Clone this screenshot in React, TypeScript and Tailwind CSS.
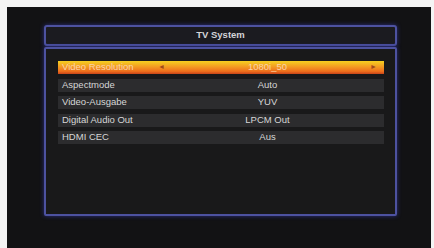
const rows: Array<{ label: string; value: string }> = [
	{ label: "Video Resolution", value: "1080i_50" },
	{ label: "Aspectmode", value: "Auto" },
	{ label: "Video-Ausgabe", value: "YUV" },
	{ label: "Digital Audio Out", value: "LPCM Out" },
	{ label: "HDMI CEC", value: "Aus" },
];

export default function App() {
	return (
		<div className="w-[434px] h-[248px] bg-[#f4f4f4] pt-[7px] pl-[7px] pr-[3px] flex font-['Liberation_Sans',Arial,sans-serif]">
			<div className="flex-1 bg-[#121214] pl-[37px] pt-[18px]">
				<div className="w-[353px] h-[21px] rounded-[3px] border-2 border-[#4d52a0] bg-[#1b1b20] shadow-[0_0_4px_#2c3080] flex items-center justify-center">
					<span className="text-[9.5px] font-bold text-[#d4d4d8]">TV System</span>
				</div>
				<div className="mt-[1px] w-[353px] h-[169px] rounded-[2px] border-2 border-[#4d52a0] bg-[#19191a] shadow-[0_0_4px_#2c3080] pl-[12px] pr-[11px] pt-[12px] flex flex-col gap-[4.5px]">
					{rows.map((row, i) => (
						<div
							key={row.label}
							className={`h-[13px] flex items-center text-[9.5px] ${
								i === 0
									? "bg-[linear-gradient(#f5d020,#f39a22_45%,#ee6e1c_80%,#c8441a)] text-[#fbd3a8]"
									: "bg-[#2c2c2e] text-[#d6d6d6]"
							}`}
						>
							<span className="w-[94px] pl-[4px] whitespace-nowrap">{row.label}</span>
							<div className="flex-1 flex items-center justify-between pl-[6px] pr-[7px]">
								<span className={`text-[7px] ${i === 0 ? "text-[#a04a1c]" : "invisible"}`}>◄</span>
								<span className="whitespace-nowrap">{row.value}</span>
								<span className={`text-[7px] ${i === 0 ? "text-[#a04a1c]" : "invisible"}`}>►</span>
							</div>
						</div>
					))}
				</div>
			</div>
		</div>
	);
}
